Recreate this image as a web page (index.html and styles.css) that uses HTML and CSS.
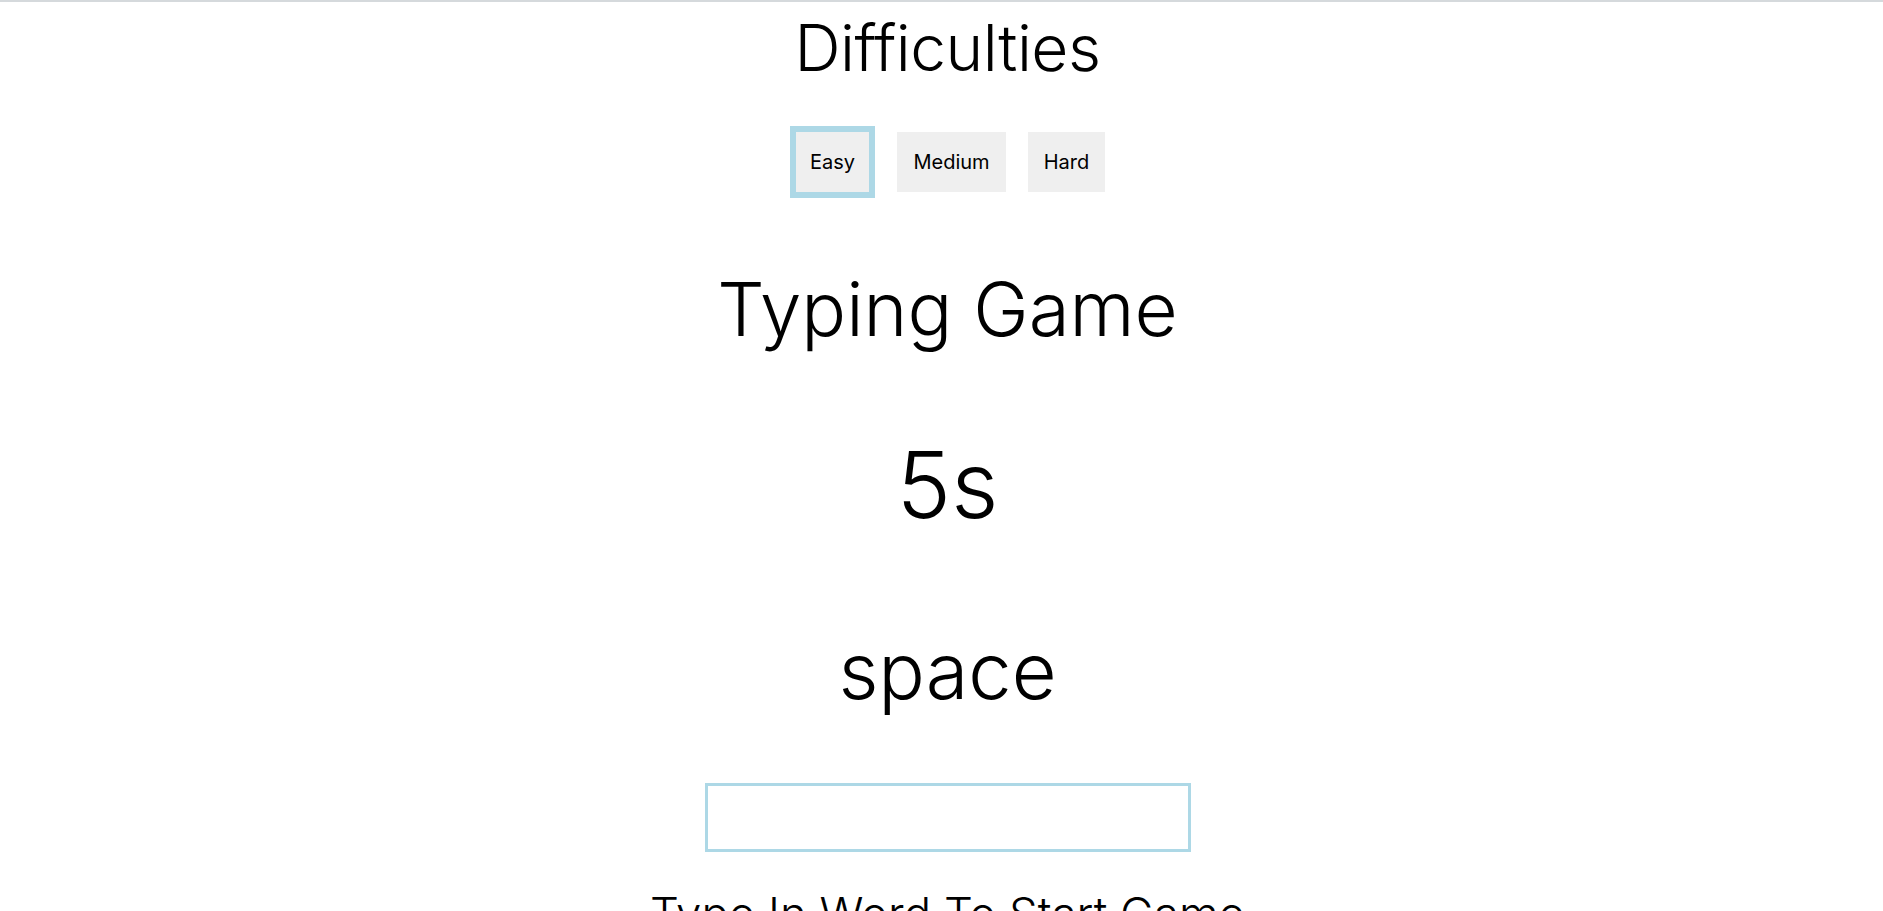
FILE: index.html
```html
<!DOCTYPE html>
<html lang="en">
<head>
<meta charset="utf-8">
<title>Typing Game</title>
<link rel="stylesheet" href="styles.css">
</head>
<body>
<div class="topline"></div>
<main class="page">
  <h2 class="difficulties">Difficulties</h2>
  <div class="levels">
    <button class="level level-easy active">Easy</button>
    <button class="level level-medium">Medium</button>
    <button class="level level-hard">Hard</button>
  </div>
  <h1 class="title">Typing Game</h1>
  <div class="timer">5s</div>
  <div class="word">space</div>
  <input class="answer" type="text" aria-label="answer">
  <p class="hint">Type In Word To Start Game</p>
</main>
</body>
</html>
```
FILE: styles.css
```css
html, body {
  margin: 0;
  padding: 0;
  background: #ffffff;
  overflow: hidden;
}

body {
  font-family: "Inter", "Open Sans", sans-serif;
  font-weight: 300;
  color: #000000;
}

.topline {
  height: 2px;
  background: #d5d9dc;
}

.page {
  display: flex;
  flex-direction: column;
  align-items: center;
  padding-left: 12px;
}

.difficulties {
  margin: 13px 0 0;
  font-size: 64px;
  line-height: 66px;
  font-weight: 300;
  letter-spacing: -0.5px;
}

.levels {
  display: flex;
  margin-top: 51px;
  margin-left: 6px;
  height: 60px;
}

.level {
  height: 60px;
  border: none;
  background: #efefef;
  font-family: "Inter", "Open Sans", sans-serif;
  font-size: 20px;
  font-weight: 400;
  color: #000;
  padding: 0;
  text-align: center;
}

.level-easy { width: 73px; margin-right: 28px; }
.level-medium { width: 109px; margin-right: 22px; }
.level-hard { width: 77px; }

.level.active {
  outline: 6px solid #add8e6;
}

.title {
  margin: 79px 0 0;
  font-size: 74.5px;
  line-height: 76px;
  font-weight: 300;
}

.timer {
  margin-top: 93px;
  font-size: 92px;
  line-height: 90px;
}

.word {
  margin-top: 102px;
  font-size: 77.5px;
  line-height: 78px;
}

.answer {
  box-sizing: border-box;
  margin-top: 73px;
  width: 486px;
  height: 69px;
  border: 3px solid #add8e6;
  outline: none;
  padding: 0 12px;
  font-family: "Inter", sans-serif;
  font-size: 28px;
  background: #fff;
}

.hint {
  margin: 40px 0 0;
  font-size: 45.5px;
  line-height: 44px;
  font-weight: 300;
}
```
